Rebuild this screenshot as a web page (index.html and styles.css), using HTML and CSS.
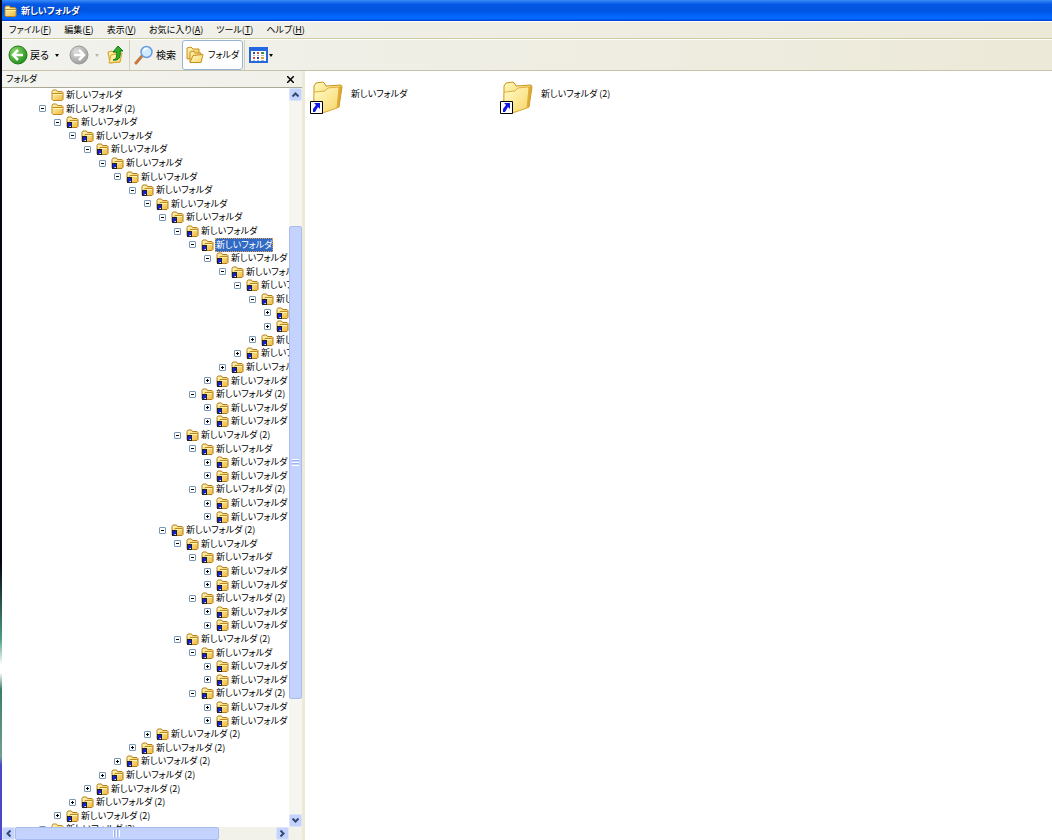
FILE: index.html
```html
<!DOCTYPE html>
<html lang="ja">
    <head>
        <meta charset="utf-8">
        <title>新しいフォルダ</title>
        <link rel="stylesheet" href="styles.css">
    </head>
    <body>
        <svg class="sprite" aria-hidden="true">
            <linearGradient id="gold" x1="0" y1="0" x2="1" y2="1">
                <stop offset="0" stop-color="#fffbc0" />
                <stop offset="1" stop-color="#f0b83c" />
            </linearGradient>
            <linearGradient id="paleGold" x1="0" y1="0" x2="1" y2="1">
                <stop offset="0" stop-color="#fffcc8" />
                <stop offset="1" stop-color="#f8d568" />
            </linearGradient>
            <radialGradient id="green" cx="0.35" cy="0.3" r="0.8">
                <stop offset="0" stop-color="#8ad86a" />
                <stop offset="1" stop-color="#1c8a16" />
            </radialGradient>
            <radialGradient id="grey" cx="0.35" cy="0.3" r="0.8">
                <stop offset="0" stop-color="#dcdcdc" />
                <stop offset="1" stop-color="#989898" />
            </radialGradient>
            <symbol id="folder" viewBox="0 0 13 12">
                <path d="M1 10.500V2.500L2 1h3.500l1 1.500H11l1 1v7l-1 1H2z" fill="url(#gold)" stroke="#c08a20" />
                <path d="M1.500 4.500h10" stroke="#c08a20" />
                <path d="M2 5.500h9.500" stroke="#fff6b0" />
            </symbol>
            <symbol id="folder-link" viewBox="0 0 13 12">
                <path d="M1 10.500V2.500L2 1h3.500l1 1.500H11l1 1v7l-1 1H2z" fill="url(#gold)" stroke="#b47c18" />
                <path d="M4 5.500V4.500h7.500" fill="none" stroke="#c08a20" />
                <path d="M4.500 5.500h6.500" stroke="#fff6b0" />
                <path d="M1 6h5v6H1z" fill="#222" />
                <path d="M2 7h3v4H2z" fill="#dfe6ff" />
                <path d="M2 7h3v3H4l-1 1H2z" fill="#1420e0" />
            </symbol>
            <symbol id="folder-large" viewBox="0 0 34 34">
                <path d="M4 26V5l2-3 7-1 2 2 1 2 15-1 1 2-3 20-17 6-6-2z" fill="url(#gold)" stroke="#c8961e" />
                <path d="M28 6l4-1-3 21-3 2z" fill="#dca830" />
                <path d="M4 12l1-1 10-1 3-3 10-1 1 1-2 20-15 5-8-3z" fill="url(#paleGold)" stroke="#e0b040" />
                <path d="M.5 20.500h12v12H.5z" fill="#fff" stroke="#000" />
                <path d="M4 22h6v6l-2-2-3 5H3v-3l3-4z" fill="#1018e8" />
            </symbol>
        </svg>

        <div class="window">
            <header class="title-bar">
                <svg width="13" height="12"><use href="#folder" /></svg>
                <h1>新しいフォルダ</h1>
            </header>

            <nav class="menu-bar">
                <button>ファイル(<u>F</u>)</button>
                <button>編集(<u>E</u>)</button>
                <button>表示(<u>V</u>)</button>
                <button>お気に入り(<u>A</u>)</button>
                <button>ツール(<u>T</u>)</button>
                <button>ヘルプ(<u>H</u>)</button>
            </nav>

            <div class="toolbar">
                <button class="tool back">
                    <svg width="20" height="20" viewBox="0 0 20 20">
                        <circle cx="10" cy="10" r="9" fill="url(#green)" stroke="#1c7a18" />
                        <path d="M10 5l-5 5 5 5M5.500 10H15" fill="none" stroke="#fff" stroke-width="2.500" />
                    </svg>
                    戻る
                    <span class="arrow"></span>
                </button>
                <button class="tool forward" aria-label="進む" disabled>
                    <svg width="20" height="20" viewBox="0 0 20 20">
                        <circle cx="10" cy="10" r="9" fill="url(#grey)" stroke="#999" />
                        <path d="M10 5l5 5-5 5M14.500 10H5" fill="none" stroke="#fff" stroke-width="2.500" />
                    </svg>
                    <span class="arrow"></span>
                </button>
                <button class="tool up" aria-label="上へ">
                    <svg width="16" height="20" viewBox="0 0 16 20">
                        <path d="M1 7l4-1 1 1 7-1v11L3 18z" fill="url(#gold)" stroke="#d09a24" />
                        <path d="M2 18l2-8 11-2-2 9z" fill="url(#paleGold)" stroke="#d8a62c" />
                        <path d="M6 15c4-1 4-4 3.500-8H6l5-6 5 5h-3c1 6-1 10-7 9z" fill="#30ac28" stroke="#137a14" />
                    </svg>
                </button>
                <button class="tool search">
                    <svg width="20" height="20" viewBox="0 0 20 20">
                        <path d="M8 11l-6 7" stroke="#c8783c" stroke-width="3" stroke-linecap="round" />
                        <circle cx="12.500" cy="7" r="5.500" fill="#cfeaff" stroke="#6c9ce0" stroke-width="1.500" />
                        <path d="M9.500 6a3.500 3.500 0 0 1 4-2.500" fill="none" stroke="#fff" stroke-width="1.500" />
                    </svg>
                    検索
                </button>
                <button class="tool folders" aria-pressed="true">
                    <svg width="18" height="18" viewBox="0 0 18 18">
                        <path d="M1 13V2l4-1 2 2h6v9z" fill="url(#gold)" stroke="#c8901e" />
                        <path d="M4 16V6l4-1 1 2h6v9z" fill="url(#gold)" stroke="#c8901e" />
                        <path d="M4 16.500l3-7 10-1-2 8z" fill="url(#paleGold)" stroke="#c8901e" />
                    </svg>
                    フォルダ
                </button>
                <button class="tool views" aria-label="表示">
                    <svg width="19" height="16" viewBox="0 0 19 16">
                        <path d="M1 1h17v14H1z" fill="#fff" stroke="#2868d8" stroke-width="2" />
                        <path d="M0 0h19v4H0z" fill="#2468e0" />
                        <path d="M4 5h2v2H4zM8 10h2v2H8z" fill="#304ca0" />
                        <path d="M8 5h2v2H8zM4 10h2v2H4z" fill="#e05038" />
                        <path d="M12 5h3v2h-3z" fill="#38943c" />
                        <path d="M12 10h3v2h-3z" fill="#e0a030" />
                        <path d="M4 8.500h2M8 8.500h2M12 8.500h3M4 13.500h2M8 13.500h2M12 13.500h3" stroke="#a8b8d8" />
                    </svg>
                    <span class="arrow"></span>
                </button>
            </div>

            <div class="content">
                <aside class="sidebar">
                    <div class="pane-header">
                        <h2>フォルダ</h2>
                        <button class="close" aria-label="閉じる">
                            <svg width="7" height="7" viewBox="0 0 7 7">
                                <path d="M0 0l7 7M7 0L0 7" stroke="#000" stroke-width="1.500" />
                            </svg>
                        </button>
                    </div>
                    <div class="tree-area">
                        <ul class="tree" id="tree" role="tree"></ul>
                        <div class="scrollbar vertical">
                            <button class="scroll-btn" aria-label="上へスクロール">
                                <svg width="7" height="5" viewBox="0 0 7 5"><path d="M0.500 4.500l3-3 3 3" /></svg>
                            </button>
                            <div class="track"><div class="thumb"></div></div>
                            <button class="scroll-btn" aria-label="下へスクロール">
                                <svg width="7" height="5" viewBox="0 0 7 5"><path d="M0.500 0.500l3 3 3-3" /></svg>
                            </button>
                        </div>
                    </div>
                    <div class="scrollbar horizontal">
                        <button class="scroll-btn" aria-label="左へスクロール">
                            <svg width="5" height="7" viewBox="0 0 5 7"><path d="M4.500 0.500l-3 3 3 3" /></svg>
                        </button>
                        <div class="track"><div class="thumb"></div></div>
                        <button class="scroll-btn" aria-label="右へスクロール">
                            <svg width="5" height="7" viewBox="0 0 5 7"><path d="M0.500 0.500l3 3-3 3" /></svg>
                        </button>
                    </div>
                </aside>

                <main class="files">
                    <a class="file" href="#">
                        <svg width="34" height="34"><use href="#folder-large" /></svg>
                        <span>新しいフォルダ</span>
                    </a>
                    <a class="file" href="#">
                        <svg width="34" height="34"><use href="#folder-large" /></svg>
                        <span>新しいフォルダ (2)</span>
                    </a>
                </main>
            </div>
        </div>

        <script src="tree.js"></script>
    </body>
</html>
```
FILE: styles.css
```css
:root {
    --face: #ece9d8;
    --face-light: #f1f0e9;
    --line: #aca899;
    --thumb: #c3d3fd;
    --select: #316ac5;
}

* {
    box-sizing: border-box;
}

body {
    margin: 0;
    font-family: 'Noto Sans CJK JP', sans-serif;
    font-size: 9px;
    line-height: 14px;
    font-feature-settings: 'palt';
    color: #000;
}

button {
    display: flex;
    align-items: center;
    padding: 0;
    border: none;
    background: none;
    font: inherit;
    font-feature-settings: inherit;
    color: inherit;
}

h1,
h2 {
    margin: 0;
    font-size: inherit;
    font-weight: normal;
}

ul {
    list-style: none;
    margin: 0;
    padding: 0;
}

svg {
    flex: none;
}

.sprite {
    position: absolute;
    width: 0;
    height: 0;
}

.window {
    display: flex;
    flex-direction: column;
    height: 100vh;
    border-left: 2px solid;
    border-image: linear-gradient(#05050f 67%, #4c9c88 76%, #fff 79%, #fff 80%, #3c7c68 82%, #6fa090 90%, #4a48c8 91%) 1;
}

.title-bar {
    display: flex;
    align-items: center;
    gap: 4px;
    height: 21px;
    padding-left: 2px;
    background: linear-gradient(#3c8cf8, #0458e4 20%, #0054e0 50%, #0068ff 80%, #0068ff 90%, #0038c8);
    color: #fff;
    text-shadow: 1px 1px #0a2a80;
}

.title-bar h1 {
    font-weight: bold;
}

.menu-bar {
    display: flex;
    align-items: center;
    gap: 13px;
    height: 18px;
    padding-left: 7px;
    border-top: 1px solid #fff;
    border-bottom: 1px solid #cfcba0;
    background: linear-gradient(to right, #f2f2ee, var(--face));
}

.toolbar {
    display: flex;
    align-items: center;
    height: 32px;
    padding-left: 6px;
    border-top: 1px solid #fff;
    border-bottom: 1px solid #c8c4ac;
    background: linear-gradient(to right, #f2f2ee, var(--face));
}

.tool {
    gap: 2px;
    height: 30px;
}

.back,
.search {
    font-size: 10px;
}

.arrow {
    border: 2px solid transparent;
    border-top: 3px solid #000;
    border-bottom: none;
    margin-left: 4px;
}

.forward {
    margin-left: 10px;
}

.forward .arrow {
    border-top-color: #b8b4a8;
}

.up {
    margin-left: 8px;
    padding-right: 6px;
    border-right: 1px solid #d4d0c0;
}

.search {
    margin: 0 6px 0 4px;
}

.folders {
    gap: 4px;
    padding: 0 3px;
    border: 1px solid #98b4d4;
    border-radius: 3px;
    background: #fff;
}

.views {
    gap: 0;
    margin-left: 1px;
    padding-left: 4px;
    border-left: 1px solid #d4d0c0;
}

.views .arrow {
    margin-left: 1px;
}

.content {
    display: flex;
    flex: 1;
    min-height: 0;
}

.sidebar {
    display: flex;
    flex-direction: column;
    flex: none;
    width: 303px;
    border-right: 3px solid var(--face);
}

.pane-header {
    display: flex;
    align-items: center;
    justify-content: space-between;
    height: 17px;
    padding: 0 8px 0 4px;
    border-bottom: 1px solid var(--line);
    background: linear-gradient(to right, #f4f4f0, var(--face-light));
}

.tree-area {
    display: flex;
    flex: 1;
    min-height: 0;
}

.tree {
    flex: 1;
    min-width: 0;
    overflow: hidden;
    background: #fff;
}

/* rows average 13.6px, so two in every five are a pixel shorter */
.tree li {
    display: flex;
    align-items: center;
    height: 14px;
    padding-left: calc(37px + var(--level) * 15px);
    white-space: nowrap;
}

.tree li:nth-child(5n + 2),
.tree li:nth-child(5n + 4) {
    height: 13px;
}

.tree svg {
    margin-right: 1px;
}

.toggle {
    position: relative;
    flex: none;
    width: 7px;
    height: 7px;
    margin-right: 5px;
    border: 1px solid #7898b5;
    border-radius: 1px;
    background: #fff;
}

.toggle::before,
.toggle[aria-expanded='false']::after {
    content: '';
    position: absolute;
    top: 2px;
    left: 1px;
    width: 3px;
    height: 1px;
    background: #000;
}

.toggle[aria-expanded='false']::after {
    transform: rotate(90deg);
}

.toggle.none {
    visibility: hidden;
}

.name {
    padding: 0 1px;
}

.selected .name {
    background: var(--select);
    color: #fff;
    outline: 1px dotted #e0a050;
    outline-offset: -1px;
}

.scrollbar {
    display: flex;
    background: #f6f5f0;
}

.vertical {
    flex-direction: column;
    width: 13px;
}

.horizontal {
    height: 13px;
    padding-right: 13px;
    background: #f3f2ea;
}

.scroll-btn {
    flex: none;
    justify-content: center;
    width: 13px;
    height: 13px;
    border: 1px solid #dce4fa;
    border-radius: 2px;
    background: var(--thumb);
}

.scroll-btn path {
    fill: none;
    stroke: #344a70;
    stroke-width: 2;
}

.track {
    display: flex;
    flex: 1;
}

.thumb {
    display: flex;
    align-items: center;
    justify-content: center;
    border: 1px solid #a8bcf0;
    border-radius: 2px;
    background: var(--thumb);
}

.vertical .track {
    flex-direction: column;
    padding: 125px 0 115px;
}

.vertical .thumb {
    flex: 1;
}

.horizontal .thumb {
    width: 78%;
}

.thumb::after {
    content: '';
    width: 7px;
    height: 7px;
    background: repeating-linear-gradient(#fff 0 1px, #98b0f0 1px 2px, transparent 2px 3px);
}

.horizontal .thumb::after {
    background: repeating-linear-gradient(to right, #fff 0 1px, #98b0f0 1px 2px, transparent 2px 3px);
}

.files {
    display: grid;
    grid-template-columns: repeat(auto-fill, 190px);
    align-content: start;
    flex: 1;
    padding: 10px 5px;
    background: #fff;
}

.file {
    display: flex;
    gap: 7px;
    color: inherit;
    text-decoration: none;
}

.file span {
    padding-top: 6px;
}
```
FILE: tree.js
```javascript
// "level sign", with * for names that carry (2)
const rows = `
1 1-* 2- 3- 4- 5- 6- 7- 8- 9- 10- 11- 12- 13- 14- 15- 16+ 16+* 15+* 14+* 13+* 12+*
11-* 12+ 12+* 10-* 11- 12+ 12+* 11-* 12+ 12+*
9-* 10- 11- 12+ 12+* 11-* 12+ 12+* 10-* 11- 12+ 12+* 11-* 12+ 12+*
8+* 7+* 6+* 5+* 4+* 3+* 2+* 1+*
`.trim().split(/\s+/);

const SELECTED = 11;

document.getElementById('tree').innerHTML = rows.map((row, i) => {
    const level = parseInt(row, 10);
    const toggle = /[-+]/.test(row)
        ? `<button class="toggle" aria-label="展開" aria-expanded="${row.includes('-')}"></button>`
        : '<span class="toggle none"></span>';
    const icon = level === 1 ? 'folder' : 'folder-link';
    return `<li role="treeitem" aria-level="${level}" class="${i === SELECTED ? 'selected' : ''}" style="--level: ${level - 1}">
        ${toggle}<svg width="13" height="12"><use href="#${icon}" /></svg>
        <span class="name">新しいフォルダ${row.includes('*') ? ' (2)' : ''}</span>
    </li>`;
}).join('');
```
